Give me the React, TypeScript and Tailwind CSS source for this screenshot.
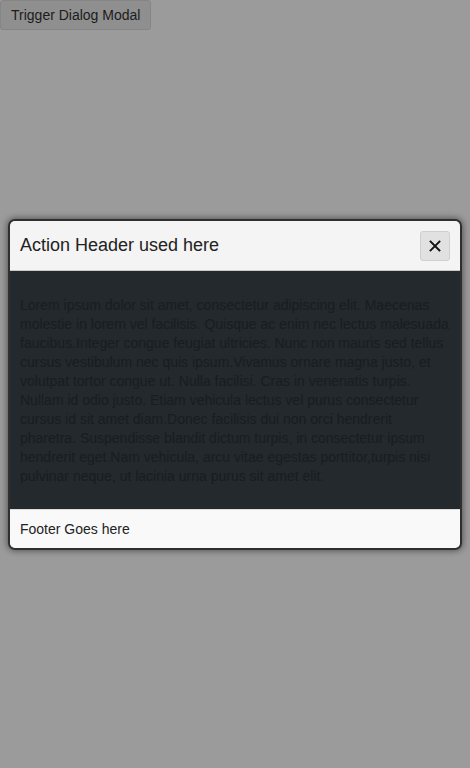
import React from 'react';

const lorem =
    'Lorem ipsum dolor sit amet, consectetur adipiscing elit. Maecenas molestie in lorem vel facilisis. Quisque ac enim nec lectus malesuada faucibus.Integer congue feugiat ultricies. Nunc non mauris sed tellus cursus vestibulum nec quis ipsum.Vivamus ornare magna justo, et volutpat tortor congue ut. Nulla facilisi. Cras in venenatis turpis. Nullam id odio justo. Etiam vehicula lectus vel purus consectetur cursus id sit amet diam.Donec facilisis dui non orci hendrerit pharetra. Suspendisse blandit dictum turpis, in consectetur ipsum hendrerit eget.Nam vehicula, arcu vitae egestas porttitor,turpis nisi pulvinar neque, ut lacinia urna purus sit amet elit.';

export default function App() {
    return (
        <div className="min-h-[768px] w-full bg-[#9b9b9b] font-['Liberation_Sans',Arial,sans-serif]">
            <button className="h-[30px] px-[10px] rounded-[3px] border border-[#858585] bg-[#8f8f8f] text-[14px] text-[#1c1c1c]">
                Trigger Dialog Modal
            </button>

            <div className="mt-[191px] mx-[10px] rounded-[5px] overflow-hidden shadow-[0_0_0_2px_#2f2f2f,0_0_6px_3px_rgba(0,0,0,0.45)]">
                <div className="flex items-center justify-between h-[50px] px-[10px] bg-[#f4f4f4] border-b border-[#c9c9c9]">
                    <h2 className="text-[18px] text-[#222]">Action Header used here</h2>
                    <button className="w-[30px] h-[30px] flex items-center justify-center rounded-[3px] border border-[#cfcfcf] bg-[#e1e1e1] text-[#111]">
                        <svg width="12" height="12" viewBox="0 0 12 12" stroke="currentColor" strokeWidth="1.8" strokeLinecap="square">
                            <path d="M1.5 1.5 L10.5 10.5 M10.5 1.5 L1.5 10.5" />
                        </svg>
                    </button>
                </div>
                <div className="bg-[#23292d] px-[10px] pt-[25px] pb-[23px]">
                    <p className="text-[14px] leading-[19px] text-[#181d20]">{lorem}</p>
                </div>
                <div className="bg-[#f9f9f9] border-t border-[#dcdcdc] px-[10px] pt-[10px] pb-[9px] text-[14px] leading-[19px] text-[#222]">
                    Footer Goes here
                </div>
            </div>
        </div>
    );
}
